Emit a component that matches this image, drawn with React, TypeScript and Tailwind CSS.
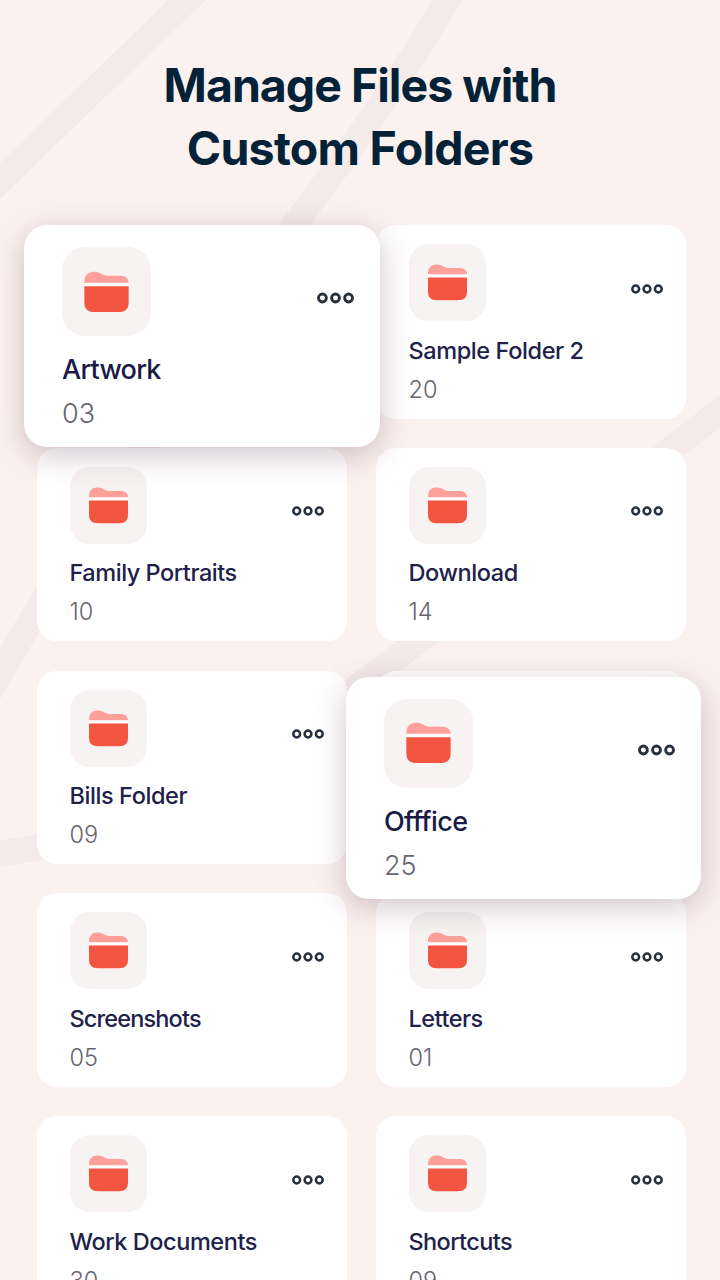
import { clsx } from "clsx"

type Folder = {
  name: string
  count: string
  // optical spacing of the label
  tracking: string
}

const folders: Folder[] = [
  { name: "Artwork", count: "03", tracking: "tracking-[-0.75px]" },
  { name: "Sample Folder 2", count: "20", tracking: "tracking-[-0.4px]" },
  { name: "Family Portraits", count: "10", tracking: "tracking-[-0.46px]" },
  { name: "Download", count: "14", tracking: "tracking-[-0.42px]" },
  { name: "Bills Folder", count: "09", tracking: "tracking-[-0.42px]" },
  { name: "Offfice", count: "25", tracking: "tracking-[-0.6px]" },
  { name: "Screenshots", count: "05", tracking: "tracking-[-0.85px]" },
  { name: "Letters", count: "01", tracking: "tracking-[-0.5px]" },
  { name: "Work Documents", count: "30", tracking: "tracking-[-0.43px]" },
  { name: "Shortcuts", count: "09", tracking: "tracking-[-0.6px]" },
]

// cards that are lifted above the grid, with their offset from the cell
const lifted: Record<string, string> = {
  Artwork: "-left-[13px] top-0 w-[356px]",
  Offfice: "-left-[30px] top-[6px] w-[355px]",
}

function FolderIcon({ className }: { className?: string }) {
  return (
    <svg viewBox="0 0 39 37" className={className}>
      <path
        d="M0 11 V9 C0 4 3.5 0.6 8 0.6 C14.5 0.4 15.5 4 20.5 4.1 H31.5 C36 4.1 39 6.5 39 10.3 V11 Z"
        fill="#fca099"
      />
      <path d="M0 10.3 H39 V13.8 H0 Z" fill="#fff" />
      <path d="M0 13.5 H39 V27.5 C39 33.5 36 36.2 30 36.2 H9 C3 36.2 0 33.5 0 27.5 Z" fill="#f25540" />
    </svg>
  )
}

function MoreIcon({ className }: { className?: string }) {
  return (
    <svg viewBox="0 0 32 10" className={className} fill="none" stroke="#26303f" strokeWidth="2.5">
      <circle cx="4.7" cy="5" r="3.4" />
      <circle cx="16" cy="5" r="3.4" />
      <circle cx="27.3" cy="5" r="3.4" />
    </svg>
  )
}

function FolderCard({ folder }: { folder: Folder }) {
  return (
    <div className="h-[193.5px] rounded-[20px] bg-white pl-[32.5px] pr-[23px] pt-[19px]">
      <div className="flex justify-between">
        <div className="flex h-[77px] w-[77px] items-center justify-center rounded-[20px] bg-[#f7f3f2]">
          <FolderIcon className="h-[37px] w-[39px]" />
        </div>
        <MoreIcon className="mt-[39.5px] h-[10px] w-[32px]" />
      </div>
      <h2
        className={clsx(
          "mt-[13.5px] whitespace-nowrap text-[23.5px] font-medium leading-[32px] text-[#20214b]",
          folder.tracking
        )}
      >
        {folder.name}
      </h2>
      <p className="mt-[7px] text-[23.5px] font-light leading-[32px] text-[#65656f]">{folder.count}</p>
    </div>
  )
}

function LiftedCard({ folder }: { folder: Folder }) {
  return (
    <div
      className={clsx(
        "absolute z-10 h-[222px] rounded-[23px] bg-white pl-[38px] pr-[26.5px] pt-[22px] shadow-[0_8px_32px_rgba(75,25,50,0.25)]",
        lifted[folder.name]
      )}
    >
      <div className="flex justify-between">
        <div className="flex h-[89px] w-[89px] items-center justify-center rounded-[23px] bg-[#f7f3f2]">
          <FolderIcon className="h-[42px] w-[45px]" />
        </div>
        <MoreIcon className="mt-[45px] h-[12px] w-[37px]" />
      </div>
      <h2
        className={clsx(
          "mt-[16px] whitespace-nowrap text-[27px] font-medium leading-[36px] text-[#191a46]",
          folder.tracking
        )}
      >
        {folder.name}
      </h2>
      <p className="mt-[8px] text-[27px] font-light leading-[36px] text-[#65656f]">{folder.count}</p>
    </div>
  )
}

function Ribbons() {
  return (
    <svg
      viewBox="0 0 720 1280"
      className="pointer-events-none absolute inset-0 h-[1280px] w-[720px]"
      fill="none"
      stroke="#f4eaea"
      strokeWidth="26"
    >
      <path d="M208 -20 L-20 200" />
      <path d="M459 -20 Q400 85 294 225 C200 375 60 560 -10 692" />
      <path d="M740 396 L670 450 L400 655 C280 745 160 835 -10 855" />
    </svg>
  )
}

export default function App() {
  return (
    <main className="relative h-[1280px] w-[720px] overflow-hidden bg-[#fbf2f0] font-['Inter',sans-serif]">
      <Ribbons />

      <div className="relative">
        <h1 className="h-[225px] pt-[54px] text-center text-[46.5px] font-bold leading-[63px] text-[#032238]">
          <span className="tracking-[-1px]">Manage Files with</span>
          <br />
          <span className="tracking-[-0.75px]">Custom Folders</span>
        </h1>

        <div className="grid grid-cols-[310px_310px] gap-x-[29px] gap-y-[29.3px] pl-[37px]">
          {folders.map((folder) => (
            <div key={folder.name} className="relative">
              {lifted[folder.name] ? (
                <>
                  <div className="h-[193.5px] rounded-[20px] bg-white" />
                  <LiftedCard folder={folder} />
                </>
              ) : (
                <FolderCard folder={folder} />
              )}
            </div>
          ))}
        </div>
      </div>
    </main>
  )
}
